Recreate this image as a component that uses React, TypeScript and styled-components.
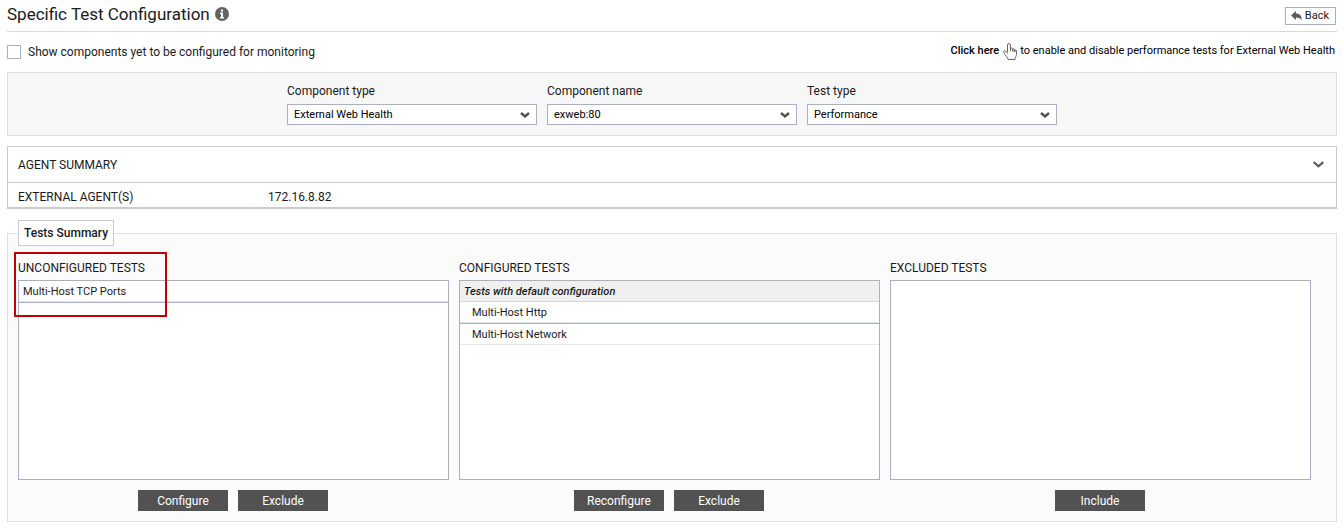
import React, { useState } from "react";
import styled, { createGlobalStyle, css } from "styled-components";

const GlobalStyle = createGlobalStyle`
  *, *::before, *::after { box-sizing: border-box; }
  body {
    margin: 0;
    background: #fff;
    color: #1a1a1a;
    font: 12px/16px Roboto, "Liberation Sans", sans-serif;
  }
  button, select, input { font: inherit; color: inherit; }
`;

const Page = styled.main`
  padding: 0 7px 6px;
`;

const Header = styled.header`
  display: flex;
  align-items: center;
  justify-content: space-between;
  height: 32px;
  border-bottom: 1px solid #d9d9d9;
`;

const TitleGroup = styled.div`
  display: flex;
  align-items: center;
  gap: 5px;
  padding-bottom: 4px;
`;

const Title = styled.h1`
  margin: 0;
  font-size: 17px;
  line-height: 24px;
  font-weight: 400;
`;

const InfoButton = styled.button`
  display: flex;
  padding: 0;
  border: 0;
  background: none;
`;

const BackButton = styled.button`
  display: flex;
  align-items: center;
  gap: 3px;
  height: 18px;
  margin-right: 1px;
  padding: 0 6px 0 5px;
  border: 1px solid #aab0bf;
  background: #fff;
  font-size: 11px;
  line-height: 16px;
`;

const OptionsRow = styled.div`
  display: flex;
  align-items: center;
  justify-content: space-between;
  height: 40px;
  padding-right: 2px;
`;

const CheckLabel = styled.label`
  display: flex;
  align-items: center;
  gap: 7px;
`;

const Checkbox = styled.input`
  appearance: none;
  width: 14px;
  height: 14px;
  margin: 0;
  border: 1px solid #aab0bf;
  background: #fff;
  &:checked { background: #525252; }
`;

const Hint = styled.p`
  display: flex;
  align-items: center;
  gap: 3px;
  margin: 0;
  padding-bottom: 2px;
  font-size: 11px;
  color: #000;
`;

const HintLink = styled.a`
  display: flex;
  align-items: center;
  gap: 4px;
  color: inherit;
  font-weight: 500;
  text-decoration: none;
`;

const Filters = styled.section`
  display: flex;
  justify-content: center;
  gap: 10px;
  height: 64px;
  padding-top: 10px;
  border: 1px solid #dedede;
  background: #f7f7f7;
`;

const Field = styled.label`
  display: flex;
  flex-direction: column;
  gap: 5px;
  width: 250px;
`;

const SelectBox = styled.span`
  position: relative;
  display: block;
`;

const Select = styled.select`
  appearance: none;
  display: block;
  width: 100%;
  height: 21px;
  padding: 0 24px 0 6px;
  border: 1px solid #aab0bf;
  border-radius: 0;
  background: #fff;
  color: #000;
  font-size: 11px;
`;

const SelectArrow = styled.svg`
  position: absolute;
  top: 8px;
  right: 7px;
  pointer-events: none;
`;

const Agents = styled.section`
  margin-top: 10px;
  border: 1px solid #ccc;
  border-bottom-width: 2px;
`;

const AgentsToggle = styled.button`
  display: flex;
  align-items: center;
  justify-content: space-between;
  width: 100%;
  height: 36px;
  padding: 0 12px 0 10px;
  border: 0;
  border-bottom: 1px solid #ccc;
  background: #fff;
`;

const AgentRow = styled.dl`
  display: flex;
  margin: 0;
  padding: 6px 10px 2px;
`;

const AgentLabel = styled.dt`
  width: 250px;
`;

const AgentValue = styled.dd`
  margin: 0;
`;

const Summary = styled.fieldset`
  min-width: 0;
  margin: 11px 0 0;
  padding: 14px 25px 10px 10px;
  border: 1px solid #e0e0e0;
  background: #fbfbfb;
`;

const SummaryLegend = styled.legend`
  height: 26px;
  padding: 0 5px;
  border: 1px solid #c6ccd2;
  background: #fff;
  line-height: 24px;
  font-weight: 500;
`;

const Columns = styled.div`
  display: flex;
  gap: 10px;
`;

const Column = styled.section<{ $share: number }>`
  position: relative;
  flex: ${(p) => p.$share} 1 0;
  min-width: 0;
`;

const ColumnTitle = styled.h2`
  margin: 0 0 4px;
  font-size: 12px;
  line-height: 16px;
  font-weight: 400;
`;

const TestList = styled.ul`
  height: 200px;
  margin: 0;
  padding: 0;
  border: 1px solid #aab0bf;
  background: #fff;
  list-style: none;
  overflow: auto;
`;

const ListHeading = styled.li`
  height: 21px;
  padding: 0 4px;
  border-bottom: 1px solid #d2d4d8;
  background: #f0f0f0;
  font-size: 11px;
  line-height: 22px;
  font-weight: 500;
  font-style: italic;
`;

const TestItem = styled.li<{ $nested?: boolean; $ruled?: boolean }>`
  height: 21px;
  padding: 0 ${(p) => (p.$nested ? 12 : 4)}px;
  border-bottom: 1px solid #e4e6ea;
  font-size: 11px;
  line-height: 22px;
  ${(p) =>
    p.$ruled &&
    css`
      margin-bottom: 1px;
      box-shadow: 0 1px 0 #aab0bf;
    `}
`;

const Actions = styled.div`
  display: flex;
  justify-content: center;
  gap: 10px;
  margin-top: 10px;
  padding-right: 1px;
`;

const ActionButton = styled.button`
  width: 90px;
  height: 21px;
  padding: 1px 0 0;
  border: 0;
  background: #525252;
  color: #fff;
  font-size: 12px;
  line-height: 20px;
`;

const Highlight = styled.div`
  position: absolute;
  top: -8px;
  left: -4px;
  width: 153px;
  height: 65px;
  border: 2px solid #c00000;
  pointer-events: none;
`;

const InfoIcon = () => (
  <svg width="14" height="14" viewBox="0 0 14 14" aria-hidden="true">
    <circle cx="7" cy="7" r="7" fill="#636363" />
    <path d="M6 2.500h2v2H6zM5 5.500h3V10h1v1.500H5V10h1V7H5z" fill="#fff" />
  </svg>
);

const BackIcon = () => (
  <svg width="11" height="10" viewBox="0 0 11 10" aria-hidden="true">
    <path d="M0 4.500 5 0v2.500c3.800 0 6 2.500 5.600 7C9.600 7.200 8 6.500 5 6.500V9z" fill="#5c5c5c" />
  </svg>
);

const HandIcon = () => (
  <svg width="14" height="17" viewBox="0 0 14 17" aria-hidden="true">
    <path
      d="M4.500 9.500V1.900c0-1.800 3-1.800 3 0V7.500M7.500 8V5.800c0-1 2.300-1 2.300 0V8.500M9.800 8.500V6.600c0-1 2-1 2 0V9M11.800 9V7.800c0-.9 1.700-.9 1.700 0v3.700c0 1.800-1.300 2.200-1.500 5H5c0-2-2-3.300-2.900-5L.7 9.200C.2 7.700 1.800 7 2.700 8.200L4.500 10.500"
      fill="#fff"
      stroke="#666"
      strokeWidth="1"
      strokeLinejoin="round"
    />
  </svg>
);

const ChevronIcon = () => (
  <svg width="11" height="7" viewBox="0 0 11 7" aria-hidden="true">
    <path d="M.7 1.200l4.800 4.200 4.800-4.200" fill="none" stroke="#5c5c5c" strokeWidth="2.200" />
  </svg>
);

const filters = [
  { id: "component-type", label: "Component type", value: "External Web Health" },
  { id: "component-name", label: "Component name", value: "exweb:80" },
  { id: "test-type", label: "Test type", value: "Performance" },
];

export default function App() {
  const [open, setOpen] = useState(true);

  return (
    <>
      <GlobalStyle />
      <Page>
        <Header>
          <TitleGroup>
            <Title>Specific Test Configuration</Title>
            <InfoButton type="button" aria-label="Information">
              <InfoIcon />
            </InfoButton>
          </TitleGroup>
          <BackButton type="button">
            <BackIcon />
            Back
          </BackButton>
        </Header>

        <OptionsRow>
          <CheckLabel>
            <Checkbox type="checkbox" />
            Show components yet to be configured for monitoring
          </CheckLabel>
          <Hint>
            <HintLink href="#tests">
              Click here
              <HandIcon />
            </HintLink>
            to enable and disable performance tests for External Web Health
          </Hint>
        </OptionsRow>

        <Filters>
          {filters.map((f) => (
            <Field key={f.id} htmlFor={f.id}>
              {f.label}
              <SelectBox>
                <Select id={f.id} defaultValue={f.value}>
                  <option>{f.value}</option>
                </Select>
                <SelectArrow width="10" height="7" viewBox="0 0 10 7" aria-hidden="true">
                  <path d="M1 1l4 3.500 4-3.500" fill="none" stroke="#505050" strokeWidth="2.400" />
                </SelectArrow>
              </SelectBox>
            </Field>
          ))}
        </Filters>

        <Agents>
          <AgentsToggle type="button" aria-expanded={open} onClick={() => setOpen(!open)}>
            AGENT SUMMARY
            <ChevronIcon />
          </AgentsToggle>
          {open && (
            <AgentRow>
              <AgentLabel>EXTERNAL AGENT(S)</AgentLabel>
              <AgentValue>172.16.8.82</AgentValue>
            </AgentRow>
          )}
        </Agents>

        <Summary id="tests">
          <SummaryLegend>Tests Summary</SummaryLegend>
          <Columns>
            <Column $share={431}>
              <ColumnTitle>UNCONFIGURED TESTS</ColumnTitle>
              <TestList>
                <TestItem $ruled>Multi-Host TCP Ports</TestItem>
              </TestList>
              <Actions>
                <ActionButton type="button">Configure</ActionButton>
                <ActionButton type="button">Exclude</ActionButton>
              </Actions>
              <Highlight />
            </Column>
            <Column $share={421}>
              <ColumnTitle>CONFIGURED TESTS</ColumnTitle>
              <TestList>
                <ListHeading>Tests with default configuration</ListHeading>
                <TestItem $nested $ruled>Multi-Host Http</TestItem>
                <TestItem $nested>Multi-Host Network</TestItem>
              </TestList>
              <Actions>
                <ActionButton type="button">Reconfigure</ActionButton>
                <ActionButton type="button">Exclude</ActionButton>
              </Actions>
            </Column>
            <Column $share={421}>
              <ColumnTitle>EXCLUDED TESTS</ColumnTitle>
              <TestList />
              <Actions>
                <ActionButton type="button">Include</ActionButton>
              </Actions>
            </Column>
          </Columns>
        </Summary>
      </Page>
    </>
  );
}
